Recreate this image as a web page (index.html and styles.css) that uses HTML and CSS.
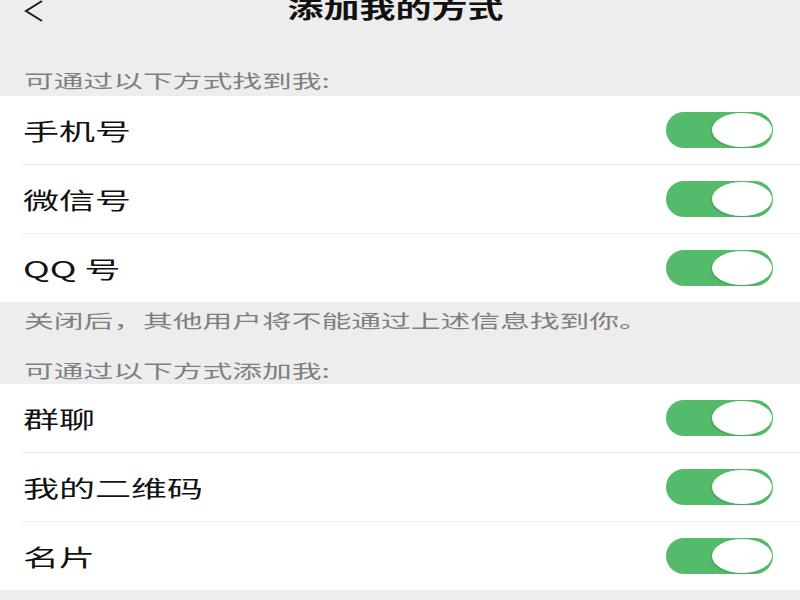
FILE: index.html
```html
<!DOCTYPE html>
<html lang="zh-CN">
<head>
    <meta charset="UTF-8">
    <meta name="viewport" content="width=device-width, initial-scale=1.0">
    <title>添加我的方式</title>
    <link rel="stylesheet" href="styles.css">
</head>
<body>
    <header class="nav">
        <div class="nav-back">
            <svg width="20" height="22" viewBox="0 0 20 22">
                <polyline points="18,1 2,11 18,21" fill="none" stroke="#1a1a1a" stroke-width="2"/>
            </svg>
        </div>
        <h1 class="nav-title"><span class="wide">添加我的方式</span></h1>
        <div></div>
    </header>

    <main>
        <p class="group-label first"><span class="wide">可通过以下方式找到我:</span></p>
        <div class="group">
            <div class="row">
                <span class="wide row-text">手机号</span>
                <span class="switch on"><span class="knob"></span></span>
            </div>
            <div class="row">
                <span class="wide row-text">微信号</span>
                <span class="switch on"><span class="knob"></span></span>
            </div>
            <div class="row">
                <span class="wide row-text">QQ 号</span>
                <span class="switch on"><span class="knob"></span></span>
            </div>
        </div>
        <p class="group-note"><span class="wide">关闭后，其他用户将不能通过上述信息找到你。</span></p>

        <p class="group-label second"><span class="wide">可通过以下方式添加我:</span></p>
        <div class="group">
            <div class="row">
                <span class="wide row-text">群聊</span>
                <span class="switch on"><span class="knob"></span></span>
            </div>
            <div class="row">
                <span class="wide row-text">我的二维码</span>
                <span class="switch on"><span class="knob"></span></span>
            </div>
            <div class="row">
                <span class="wide row-text">名片</span>
                <span class="switch on"><span class="knob"></span></span>
            </div>
        </div>
    </main>
</body>
</html>
```

FILE: styles.css
```css
body {
    margin: 0;
    padding: 0;
    background-color: #ededed;
    font-family: "Noto Sans CJK SC", "Noto Sans", sans-serif;
    color: #111;
}
/* the screenshot is stretched sideways, so text is widened to match */
.wide {
    display: inline-block;
    transform: scaleX(1.6);
    transform-origin: left center;
    white-space: nowrap;
}
.nav {
    display: grid;
    grid-template-columns: 1fr auto 1fr;
    align-items: start;
    height: 24px;
}
.nav-back {
    padding-left: 24px;
    padding-top: 0;
    display: flex;
    height: 22px;
}
.nav-title {
    margin: -4px 8px 0 0;
    width: 220px;
    text-align: center;
    font-size: 22.5px;
    font-weight: bold;
    line-height: 24px;
}
.nav-title .wide {
    transform-origin: center center;
}
.group-label,
.group-note {
    margin: 0;
    padding: 0 24px;
    font-size: 18.6px;
    line-height: 24px;
    color: #7f7f7f;
}
.group-label.first {
    padding-top: 44px;
    padding-bottom: 4px;
}
.group-note {
    padding-top: 6px;
}
.group-label.second {
    padding-top: 26px;
    padding-bottom: 2px;
}
.group {
    background-color: white;
}
.row {
    height: 68px;
    margin-left: 22px;
    padding-left: 1px;
    padding-right: 27px;
    display: flex;
    justify-content: space-between;
    align-items: center;
    border-bottom: 1px solid #ececec;
}
.row:last-child {
    border-bottom: none;
}
.row-text {
    font-size: 22.5px;
    line-height: 28px;
}
.switch {
    width: 107px;
    height: 36px;
    border-radius: 18px;
    background-color: #e5e5e5;
    display: flex;
    align-items: center;
    padding: 0 1px;
    box-sizing: border-box;
}
.switch.on {
    background-color: #53bb6a;
    justify-content: flex-end;
}
.knob {
    width: 60px;
    height: 34px;
    border-radius: 50%;
    background-color: white;
    box-shadow: -1px 1px 2px rgba(0, 0, 0, 0.15);
}
```
